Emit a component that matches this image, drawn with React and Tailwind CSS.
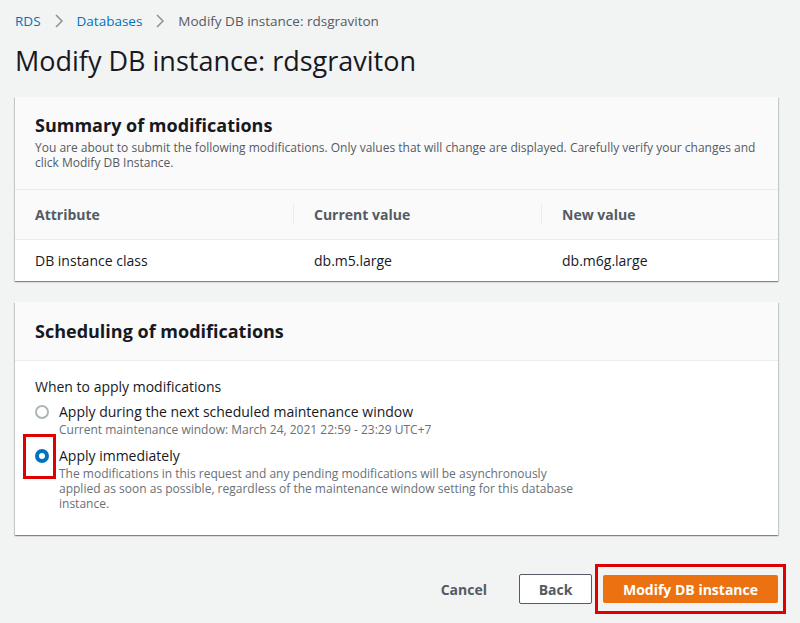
import React, { useState } from 'react'

const Chevron = () => (
  <svg width="10" height="14" viewBox="0 0 10 14" className="mx-[13px]">
    <path d="M2 1l6 6-6 6" fill="none" stroke="#879596" strokeWidth="1.5" />
  </svg>
)

const Radio = ({ checked }) => (
  <span
    className={
      checked
        ? 'mt-[3px] w-[14px] h-[14px] rounded-full bg-[#0073bb] flex items-center justify-center shrink-0'
        : 'mt-[3px] w-[14px] h-[14px] rounded-full border-2 border-[#aab7b8] bg-white shrink-0'
    }
  >
    {checked && <span className="w-[6px] h-[6px] rounded-full bg-white" />}
  </span>
)

const cardShadow =
  'shadow-[0_1px_1px_0_rgba(0,28,36,0.3),1px_1px_1px_0_rgba(0,28,36,0.15),-1px_1px_1px_0_rgba(0,28,36,0.15)]'

const App = () => {
  const [choice, setChoice] = useState('now')

  return (
    <div
      className="w-[800px] h-[623px] bg-[#f2f3f3] text-[#16191f] overflow-hidden"
      style={{ fontFamily: '"Open Sans", "Liberation Sans", sans-serif' }}
    >
      <div className="px-[15px] pt-[11px]">
        {/* breadcrumb */}
        <div className="flex items-center text-[13.5px] leading-[20px]">
          <span className="text-[#0073bb]">RDS</span>
          <Chevron />
          <span className="text-[#0073bb]">Databases</span>
          <Chevron />
          <span className="text-[#545b64]">Modify DB instance: rdsgraviton</span>
        </div>

        <h1 className="mt-[12px] text-[27px] leading-[36px] font-normal">Modify DB instance: rdsgraviton</h1>

        {/* summary card */}
        <div className={'mt-[18px] w-[763px] bg-white ' + cardShadow}>
          <div className="bg-[#fafafa] border-b border-[#eaeded] px-[20px] pt-[17px] pb-[19px]">
            <h2 className="text-[18px] leading-[22px] font-bold">Summary of modifications</h2>
            <p className="mt-[4px] text-[12px] leading-[15px] text-[#545b64]">
              You are about to submit the following modifications. Only values that will change are displayed. Carefully verify your changes and click Modify DB Instance.
            </p>
          </div>
          <div className="grid grid-cols-[279px_248px_1fr] bg-[#fafafa] border-b border-[#eaeded] h-[50px] items-center text-[14px] font-bold text-[#545b64]">
            <div className="pl-[20px] border-r border-[#eaeded]">Attribute</div>
            <div className="pl-[20px] border-r border-[#eaeded]">Current value</div>
            <div className="pl-[20px]">New value</div>
          </div>
          <div className="grid grid-cols-[279px_248px_1fr] h-[41px] items-center text-[14px]">
            <div className="pl-[20px]">DB instance class</div>
            <div className="pl-[20px]">db.m5.large</div>
            <div className="pl-[20px]">db.m6g.large</div>
          </div>
        </div>

        {/* scheduling card */}
        <div className={'mt-[21px] w-[763px] bg-white ' + cardShadow}>
          <div className="bg-[#fafafa] border-b border-[#eaeded] px-[20px] h-[59px] flex items-center">
            <h2 className="text-[18px] leading-[22px] font-bold">Scheduling of modifications</h2>
          </div>
          <div className="px-[20px] pt-[16px] pb-[24px] text-[14px]">
            <div className="leading-[20px]">When to apply modifications</div>
            <div className="mt-[5px] flex gap-[10px] cursor-pointer" onClick={() => setChoice('later')}>
              <Radio checked={choice === 'later'} />
              <div>
                <div className="leading-[20px]">Apply during the next scheduled maintenance window</div>
                <div className="text-[12px] leading-[15px] text-[#687078]">Current maintenance window: March 24, 2021 22:59 - 23:29 UTC+7</div>
              </div>
            </div>
            <div className="mt-[9px] flex gap-[10px] cursor-pointer" onClick={() => setChoice('now')}>
              <div className="relative">
                <Radio checked={choice === 'now'} />
                <span className="absolute left-[-12px] top-[-12px] w-[33px] h-[45px] border-[3px] border-[#e00000]" />
              </div>
              <div>
                <div className="leading-[20px]">Apply immediately</div>
                <div className="w-[520px] text-[12px] leading-[15px] text-[#687078]">
                  The modifications in this request and any pending modifications will be asynchronously applied as soon as possible, regardless of the maintenance window setting for this database instance.
                </div>
              </div>
            </div>
          </div>
        </div>

        {/* actions */}
        <div className="mt-[29px] w-[763px] flex items-center justify-end text-[14px] font-bold">
          <button className="px-[20px] h-[30px] text-[#545b64]">Cancel</button>
          <button className="ml-[12px] w-[73px] h-[30px] border border-[#545b64] rounded-[2px] bg-white text-[#545b64]">Back</button>
          <div className="ml-[3px] px-[5px] py-[8px] border-[3px] border-[#e00000] -mr-[8px]">
            <button className="w-[175px] h-[28px] rounded-[2px] bg-[#ec7211] text-white">Modify DB instance</button>
          </div>
        </div>
      </div>
    </div>
  )
}

export default App
